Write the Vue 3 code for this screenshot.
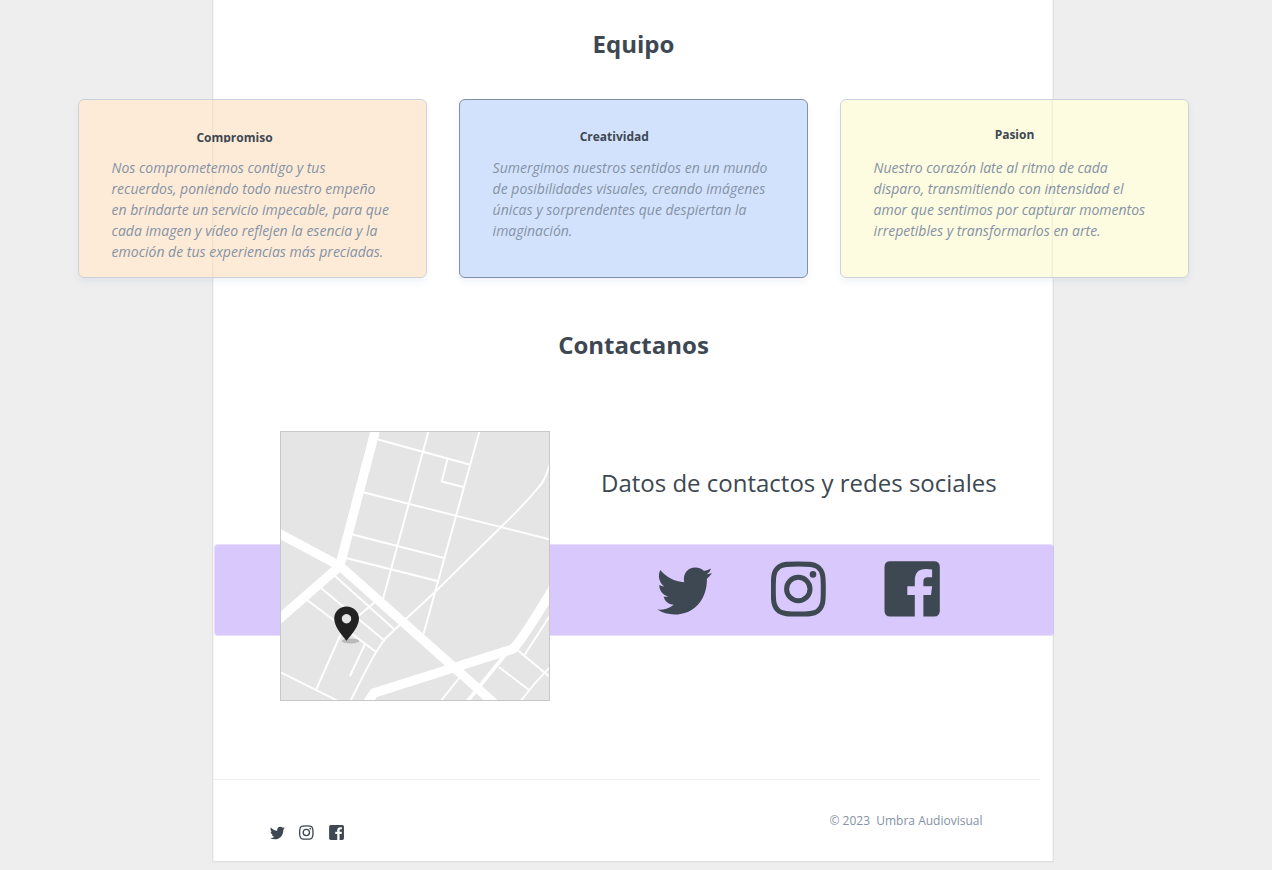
<script setup>
const cards = [
  { kind: 'peach', title: 'Compromiso', lines: ['Nos comprometemos contigo y tus', 'recuerdos, poniendo todo nuestro empeño', 'en brindarte un servicio impecable, para que', 'cada imagen y vídeo reflejen la esencia y la', 'emoción de tus experiencias más preciadas.'] },
  { kind: 'blue', title: 'Creatividad', lines: ['Sumergimos nuestros sentidos en un mundo', 'de posibilidades visuales, creando imágenes', 'únicas y sorprendentes que despiertan la', 'imaginación.'] },
  { kind: 'yellow', title: 'Pasion', lines: ['Nuestro corazón late al ritmo de cada', 'disparo, transmitiendo con intensidad el', 'amor que sentimos por capturar momentos', 'irrepetibles y transformarlos en arte.'] }
]
const icons = ['twitter', 'instagram', 'facebook']
</script>

<template>
  <div class="page">
    <svg width="0" height="0" class="defs">
      <symbol id="twitter" viewBox="0 0 56 56">
        <path d="M3.3 9C9 15.7 17.5 20.7 27.2 21.2C25.5 12.2 31.2 6.5 38.2 6.5C42 6.5 45 7.9 47 10.1Q50.8 9.3 54.1 7.5Q52.8 11.5 49.7 13.3Q52.8 12.9 55 11.9Q53 15 49.9 17.7C50.3 38.5 37 53.5 17.5 53.5Q8 53.5 .4 48.6Q9.4 49.5 16.8 43.7C11.3 43.5 7.8 40.1 6.6 35.7Q9 36.1 11.2 35.5C5.3 33.8 2.2 29.4 2.3 24.1Q4.7 25.5 7.2 25.6C1.8 21.3 .7 14.2 3.3 9Z" />
      </symbol>
      <symbol id="instagram" viewBox="0.7 0 56 56">
        <path d="M28 3C38 3 43.3 3 47.2 5.8C53 10 53 16 53 28S53 46 47.2 50.2C43.3 53 38 53 28 53S12.700 53 8.800 50.200C3 46 3 40 3 28S3 10 8.800 5.800C12.700 3 18 3 28 3Z" fill="none" stroke="currentColor" stroke-width="5" />
        <circle cx="28" cy="28" r="11.700" fill="none" stroke="currentColor" stroke-width="5" />
        <circle cx="42.700" cy="13.400" r="3.300" />
      </symbol>
      <symbol id="facebook" viewBox="0 0 56 56">
        <path d="M6.2.3H50Q55.8.3 55.8 6V49.8Q55.8 55.6 50 55.6H39.4V34H47L48.1 25.2H39.4V20.3Q39.4 16.2 43.7 16.2H48.1V8.5L42 8.1Q30.8 8.1 30.8 19.5V25.2H23.3V34H30.8V55.6H6.2Q.5 55.6.5 49.8V6Q.5.3 6.2.3Z" />
      </symbol>
    </svg>
    <main class="panel">
      <h2 class="team-title">Equipo</h2>
      <section class="cards">
        <article v-for="c in cards" :key="c.kind" class="card" :class="c.kind">
          <h3>{{ c.title }}</h3>
          <p><span v-for="l in c.lines" :key="l">{{ l }}</span></p>
        </article>
      </section>
      <h2 class="contact-title">Contactanos</h2>
      <section class="contact">
        <div class="band"></div>
        <svg class="map" viewBox="11 12 268 268">
          <rect width="290" height="290" fill="#e5e5e5" />
          <g fill="none" stroke="#fff" stroke-width="1.9">
            <path d="M108 19.5L199.5 44.5M158.5 11L113 179M209.5 11L153.5 214M177.5 39L171.7 61.5L193.5 67M94 72.5L290 122M82.5 114.5L174 138M76 138L167.5 161M281 40Q276 60 268 68Q253 86 230 108L164 173Q128 206 115 219Q105 231 81 280M65 156L125 210M51 168L115 221M37 180L106 232M105 182L86 198M73 209L46 270M95 224L80 256M10 252L70 282M281 194L254 236M245 228L281 258M229 247L259 270M281 246Q264 263 250 282M190 257L170 282" />
          </g>
          <g fill="none" stroke="#fff">
            <path stroke-width="9.3" d="M106 8L70 145M8 113L70 146L224 283M8 200L70 146M96 285L104 273L243 229Q253 219 284 167" />
            <path stroke-width="3.7" d="M239 230L196 283" />
          </g>
          <ellipse cx="80.500" cy="221" rx="8.700" ry="2.500" fill="#b9b9b9" />
          <path fill="#222" fill-rule="evenodd" d="M76.5 186.4C69.6 186.4 64.2 191.7 64.2 198.5C64.2 206 70.5 213.5 76.5 220.8C82.5 213.5 89 206 89 198.5C89 191.7 83.4 186.4 76.5 186.4ZM76.5 194A4.7 4.7 0 1 1 76.49 194Z" />
        </svg>
        <div class="social-block">
          <p>Datos de contactos y redes sociales</p>
          <div class="socials"><svg v-for="i in icons" :key="i"><use :href="'#' + i" /></svg></div>
        </div>
      </section>
      <hr>
      <footer>
        <div class="mini"><svg v-for="i in icons" :key="i"><use :href="'#' + i" /></svg></div>
        <span class="copy">© 2023&nbsp; Umbra Audiovisual</span>
      </footer>
    </main>
  </div>
</template>

<style>
body { margin: 0; }
</style>

<style scoped>
* { box-sizing: border-box; }
.page { width: 1272px; height: 870px; overflow: hidden; background: #eee; font-family: "Open Sans", sans-serif; color: #3d4852; }
.defs { display: block; }
.panel { width: 842px; height: 862px; margin-left: 212px; padding: 0 1px; background: #fff; border: solid #e1e1e1; border-width: 0 1px 1px; box-shadow: inset 1px 0 #f4f4f4, inset -1px 0 #f4f4f4, 0 1px #e8e8e8; display: flex; flex-direction: column; }
h2, h3, p { margin: 0; white-space: nowrap; }
h2 { font-size: 24px; line-height: 32px; font-weight: 700; text-align: center; padding-left: 1px; }
.team-title { margin-top: 28px; }
.cards { display: flex; gap: 32px; margin: 39px 0 0 -136px; width: 1111px; }
.card { flex: none; width: 349px; height: 179px; border: 1px solid #cad3dc; border-radius: 6px; padding: 27px 32px 0; box-shadow: 0 4px 6px rgba(60, 100, 150, .07); }
.card h3 { font-size: 12px; line-height: 16px; text-align: center; height: 30px; }
.card p { font-size: 14px; line-height: 21px; font-style: italic; color: #8492a6; padding-left: .6px; }
.card span { display: block; }
.peach { background: linear-gradient(90deg, #feebd7 133px, #f2dfcc 133px, #f2dfcc 134px, #fae7d3 134px, #fae7d3 135px, #feebd7 135px); }
.blue { background: #d3e2fc; border-color: #8090a6; }
.yellow { background: linear-gradient(90deg, #fdfbe0 210px, #f8f6dc 210px, #f8f6dc 211px, #f1efd5 211px, #f1efd5 212px, #fdfbe0 212px); }
.peach h3 { padding: 3px 36px 0 0; clip-path: inset(0 0 14.5px 0); }
.blue h3 { padding: 2px 38.500px 0 0; }
.contact-title { margin-top: 51px; }
.contact { display: grid; grid-template-columns: 66px 270px 1fr; height: 270px; margin-top: 70px; }
.band { grid-area: 1 / 1 / 2 / 4; align-self: start; width: 840px; height: 92px; margin: 113px 0 0; background: #d9c8fc; border: 1px solid #e8defd; border-right-color: #cfc0ee; border-radius: 4px; }
.map { grid-area: 1 / 2 / 2 / 3; width: 270px; height: 270px; border: 1px solid #c8c8c8; }
.social-block { grid-area: 1 / 3 / 2 / 4; padding: 34px 0 0 51px; }
.social-block p { font-size: 24px; line-height: 36px; }
.socials { display: flex; gap: 57.300px; margin: 60px 0 0 56.300px; }
.socials svg { width: 56px; height: 56px; }
svg { fill: currentColor; flex: none; }
hr { width: 827px; height: 1px; margin: 78px 0 0 -1px; border: 0; background: #edf1f6; }
footer { display: flex; justify-content: space-between; padding: 32px 69.500px 0 56px; }
.mini { display: flex; gap: 14.300px; margin-top: 13px; }
.mini svg { width: 15px; height: 15px; }
.copy { font-size: 12px; line-height: 18px; color: #8492a6; }
</style>
